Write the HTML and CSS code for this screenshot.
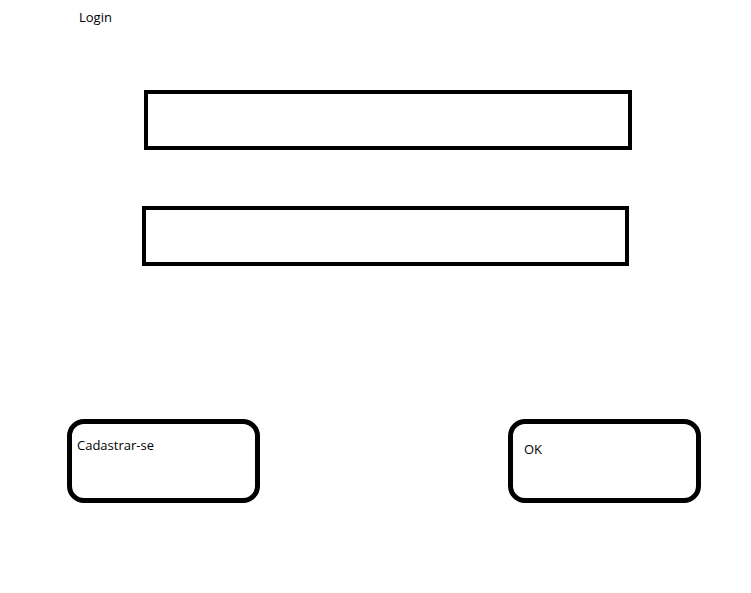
FILE: index.html
```html
<!DOCTYPE html>
<html lang="pt">
<head>
<meta charset="utf-8">
<title>Login</title>
<link rel="stylesheet" href="styles.css">
</head>
<body>
<div class="title">Login</div>
<div class="field field-user"></div>
<div class="field field-pass"></div>
<div class="actions">
  <div class="btn btn-register">Cadastrar-se</div>
  <div class="btn btn-ok">OK</div>
</div>
</body>
</html>
```

FILE: styles.css
```css
html, body {
  margin: 0;
  padding: 0;
  background: #fff;
}
body {
  font-family: "Open Sans", "Noto Sans", sans-serif;
  font-size: 13px;
  color: #000;
  width: 751px;
  height: 593px;
  overflow: hidden;
}
.title {
  padding: 9px 0 0 79px;
  line-height: 16px;
  height: 16px;
}
.field {
  box-sizing: border-box;
  width: 488px;
  height: 60px;
  border: 4px solid #000;
}
.field-user {
  margin: 65px 0 0 144px;
}
.field-pass {
  margin: 56px 0 0 142px;
  width: 487px;
}
.actions {
  display: flex;
  justify-content: space-between;
  margin-top: 153px;
  padding: 0 50px 0 67px;
}
.btn {
  box-sizing: border-box;
  width: 193px;
  height: 84px;
  border: 5px solid #000;
  border-radius: 17px;
  line-height: 16px;
}
.btn-register {
  padding: 13px 0 0 5px;
}
.btn-ok {
  padding: 17px 0 0 11px;
}
```
